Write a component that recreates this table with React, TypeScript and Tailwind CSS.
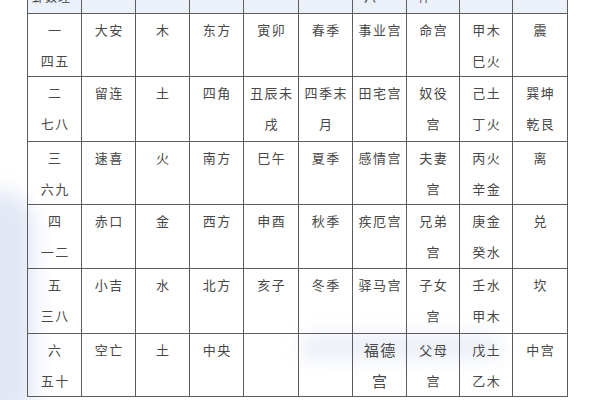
import React from "react"

type Row = string[][]

const rows: Row[] = [
  [["一", "四五"], ["大安"], ["木"], ["东方"], ["寅卯"], ["春季"], ["事业宫"], ["命宫"], ["甲木", "巳火"], ["震"]],
  [["二", "七八"], ["留连"], ["土"], ["四角"], ["丑辰未", "戌"], ["四季末", "月"], ["田宅宫"], ["奴役", "宫"], ["己土", "丁火"], ["巽坤", "乾艮"]],
  [["三", "六九"], ["速喜"], ["火"], ["南方"], ["巳午"], ["夏季"], ["感情宫"], ["夫妻", "宫"], ["丙火", "辛金"], ["离"]],
  [["四", "一二"], ["赤口"], ["金"], ["西方"], ["申酉"], ["秋季"], ["疾厄宫"], ["兄弟", "宫"], ["庚金", "癸水"], ["兑"]],
  [["五", "三八"], ["小吉"], ["水"], ["北方"], ["亥子"], ["冬季"], ["驿马宫"], ["子女", "宫"], ["壬水", "甲木"], ["坎"]],
  [["六", "五十"], ["空亡"], ["土"], ["中央"], [], [], ["福德", "宫"], ["父母", "宫"], ["戊土", "乙木"], ["中宫"]],
]

const heights = ["h-[63px]", "h-[65px]", "h-[63px]", "h-[64px]", "h-[65px]", "h-[63px]"]
const header = ["卦数理", "", "", "", "", "", "六", "神", "", ""]

export default function App() {
  return (
    <div
      className="relative w-[600px] h-[400px] overflow-hidden bg-white text-[#474747]"
      style={{ fontFamily: '"Noto Sans CJK SC", "Noto Sans", sans-serif' }}
    >
      {/* faint watermark smudges */}
      <div className="pointer-events-none absolute -left-[40px] top-[190px] w-[75px] h-[240px] rounded-full bg-[#d6def0] blur-[10px] opacity-70" />
      <div className="pointer-events-none absolute left-[300px] top-[335px] w-[200px] h-[24px] rounded-full bg-[#d3dcee] blur-[10px] opacity-50" />

      <div className="relative pl-[27px]">
        <div className="grid w-fit grid-cols-[54px_54px_54px_54px_55px_54px_54px_53px_53px_55px] border-r border-b border-[#5c5c5c]">
          {header.map((t, i) => (
            <div key={i} className="h-[13px] overflow-hidden border-l border-[#5c5c5c] bg-[#e9eef8]/90 text-[12px] leading-[12px]">
              <div className={`-mt-[9px] ${i === 0 ? "pl-[4px] tracking-[1px]" : "pl-[11px]"}`}>{t}</div>
            </div>
          ))}
          {rows.map((row, r) =>
            row.map((lines, c) => (
              <div
                key={`${r}-${c}`}
                className={`${heights[r]} border-l border-t border-[#5c5c5c] text-center`}
              >
                {lines.map((t, k) => (
                  <div
                    key={k}
                    className={`leading-[31px] tracking-[1.5px] pl-[1.5px] ${
                      r === 5 && c === 6 ? "text-[15px]" : "text-[13px]"
                    }`}
                  >
                    {t}
                  </div>
                ))}
              </div>
            ))
          )}
        </div>
      </div>
    </div>
  )
}
